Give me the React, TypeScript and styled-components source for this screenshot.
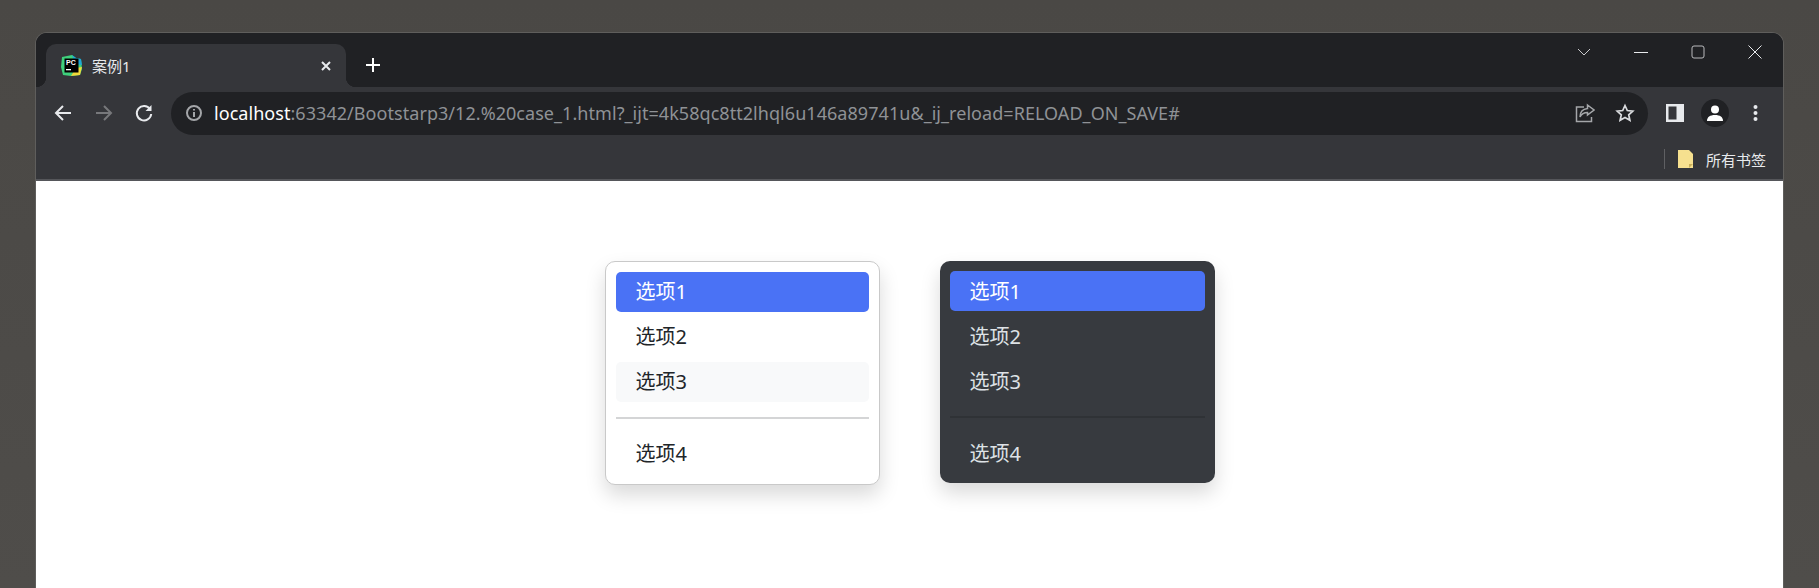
import { createGlobalStyle, styled } from 'styled-components';

const GlobalStyle = createGlobalStyle`
  html, body {
    margin: 0;
    height: 588px;
    overflow: hidden;
    background: #4c4a47;
    font-family: 'Noto Sans', 'Noto Sans CJK SC', sans-serif;
  }
`;

const SDesktop = styled.div`
  height: 588px;
  padding: 33px 36px 0;
  box-sizing: border-box;
  overflow: hidden;
  background: linear-gradient(#4a4845, #4f4d4a);
`;

const SWindow = styled.div`
  height: 600px;
  border-radius: 11px 11px 0 0;
  overflow: hidden;
  background: #202124;
  box-shadow: 0 0 0 1px #5f5e5c;
`;

const STabStrip = styled.div`
  display: flex;
  align-items: flex-start;
  height: 54px;
  padding: 11px 0 0 10px;
  box-sizing: border-box;
  background: #202124;
`;

const STab = styled.div`
  position: relative;
  display: flex;
  align-items: center;
  width: 300px;
  height: 43px;
  padding: 0 13px 0 15px;
  box-sizing: border-box;
  border-radius: 10px 10px 0 0;
  background: #35363a;
  color: #e8eaed;
  font-size: 15px;

  &::before,
  &::after {
    content: '';
    position: absolute;
    bottom: 0;
    width: 10px;
    height: 10px;
  }

  &::before {
    left: -10px;
    background: radial-gradient(circle at 0 0, transparent 10px, #35363a 10.5px);
  }

  &::after {
    right: -10px;
    background: radial-gradient(circle at 100% 0, transparent 10px, #35363a 10.5px);
  }
`;

const STabTitle = styled.span`
  flex: 1;
  margin-left: 10px;
`;

const SNewTab = styled.div`
  display: flex;
  margin: 13px 0 0 19px;
`;

const SWindowControls = styled.div`
  display: flex;
  align-items: center;
  gap: 43px;
  margin: 0 21px 0 auto;
  height: 16px;
`;

const SToolbar = styled.div`
  display: flex;
  align-items: center;
  height: 52px;
  padding: 0 25px 0 17px;
  box-sizing: border-box;
  background: #35363a;
`;

const SNavIcons = styled.div`
  display: flex;
  align-items: center;
  gap: 20.5px;
  margin-right: 17px;
`;

const SOmnibox = styled.div`
  display: flex;
  align-items: center;
  flex: 1;
  height: 43px;
  padding: 0 13px 0 14px;
  border-radius: 22px;
  background: #202124;
`;

const SUrl = styled.div`
  flex: 1;
  margin-left: 11px;
  color: #8f9296;
  font-size: 18px;
  white-space: nowrap;
  letter-spacing: 0.05px;
`;

const SHost = styled.span`
  color: #ffffff;
`;

const SOmniActions = styled.div`
  display: flex;
  align-items: center;
  gap: 20px;
`;

const SToolActions = styled.div`
  display: flex;
  align-items: center;
  gap: 17px;
  margin-left: 18px;
`;

const SMoreIcon = styled.svg`
  margin-left: 7px;
`;

const SAvatar = styled.div`
  display: flex;
  align-items: center;
  justify-content: center;
  width: 28px;
  height: 28px;
  border-radius: 50%;
  background: #202124;
`;

const SBookmarks = styled.div`
  display: flex;
  align-items: center;
  justify-content: flex-end;
  height: 40px;
  padding: 0 17px 0 0;
  box-sizing: border-box;
  background: #35363a;
`;

const SSeparator = styled.div`
  width: 1px;
  height: 20px;
  margin-right: 13px;
  background: #5f6063;
`;

const SBookmarkLabel = styled.span`
  margin-left: 13px;
  color: #e8eaed;
  font-size: 15px;
`;

const SContent = styled.main`
  display: flex;
  justify-content: center;
  align-items: flex-start;
  gap: 60px;
  height: 420px;
  padding-top: 80px;
  box-sizing: border-box;
  background: #ffffff;
  border-top: 2px solid #55565a;
`;

const SMenu = styled.ul<{ $dark?: boolean }>`
  display: flex;
  flex-direction: column;
  gap: 5px;
  width: 275px;
  margin: 0;
  padding: 10px;
  box-sizing: border-box;
  list-style: none;
  border-radius: 10px;
  border: ${({ $dark }) => ($dark ? '0' : '1px solid #c9c9c9')};
  background: ${({ $dark }) => ($dark ? '#373a3f' : '#ffffff')};
  color: ${({ $dark }) => ($dark ? '#dee2e6' : '#212529')};
  box-shadow: 0 10px 20px rgba(0, 0, 0, 0.15);
  font-size: 20px;
`;

const SItem = styled.li<{ $active?: boolean; $hover?: boolean; $dark?: boolean }>`
  height: 40px;
  padding: 0 20px;
  line-height: ${({ $dark }) => ($dark ? '42px' : '40px')};
  border-radius: 5px;
  background: ${({ $active, $hover }) => ($active ? '#4a72f5' : $hover ? '#f8f9fa' : 'transparent')};
  color: ${({ $active }) => ($active ? '#ffffff' : 'inherit')};
`;

const SDivider = styled.li<{ $dark?: boolean }>`
  height: 2px;
  margin: 10px 0;
  background: ${({ $dark }) => ($dark ? '#2f3236' : '#d4d5d6')};
`;

const PyCharmIcon = () => (
  <svg width="21" height="21" viewBox="0 0 21 21">
    <path d="M1 2 L11 0 L15 3 L20 4 L21 14 L19 20 L10 21 L2 20 L0 12 Z" fill="#3fd07c" />
    <path d="M11 0 L15 3 L20 4 L21 10 L14 9 Z" fill="#1fa8d8" />
    <path d="M10 21 L19 20 L21 12 L15 13 Z" fill="#f0d93a" />
    <rect x="3.500" y="3.500" width="14" height="14" fill="#000" />
    <text x="5" y="10" fill="#fff" fontSize="7" fontWeight="700" fontFamily="'Liberation Sans', sans-serif">PC</text>
    <rect x="5" y="14" width="5" height="1.300" fill="#fff" />
  </svg>
);

const Menu = ({ dark }: { dark?: boolean }) => (
  <SMenu $dark={dark}>
    <SItem $active $dark={dark}>选项1</SItem>
    <SItem $dark={dark}>选项2</SItem>
    <SItem $hover={!dark} $dark={dark}>选项3</SItem>
    <SDivider $dark={dark} />
    <SItem $dark={dark}>选项4</SItem>
  </SMenu>
);

const stroke = { fill: 'none', strokeWidth: 2 };

const App = () => (
  <SDesktop>
    <GlobalStyle />
    <SWindow>
      <STabStrip>
        <STab>
          <PyCharmIcon />
          <STabTitle>案例1</STabTitle>
          <svg width="14" height="14" viewBox="0 0 14 14" stroke="#e8eaed" {...stroke}>
            <path d="M3 3l8 8M11 3l-8 8" />
          </svg>
        </STab>
        <SNewTab>
          <svg width="16" height="16" viewBox="0 0 16 16" stroke="#ffffff" {...stroke}>
            <path d="M8 1v14M1 8h14" />
          </svg>
        </SNewTab>
        <SWindowControls>
          <svg width="14" height="14" viewBox="0 0 14 14" fill="none" stroke="#c9cacc">
            <path d="M1 4l6 6 6-6" />
          </svg>
          <svg width="14" height="14" viewBox="0 0 14 14" fill="none" stroke="#e8eaed">
            <path d="M0 7.500h14" />
          </svg>
          <svg width="14" height="14" viewBox="0 0 14 14" fill="none" stroke="#b9babc">
            <rect x="1" y="1" width="12" height="12" rx="2" />
          </svg>
          <svg width="14" height="14" viewBox="0 0 14 14" fill="none" stroke="#e8eaed">
            <path d="M0.500 0.500l13 13M13.500 0.500l-13 13" />
          </svg>
        </SWindowControls>
      </STabStrip>
      <SToolbar>
        <SNavIcons>
          <svg width="20" height="20" viewBox="0 0 20 20" stroke="#e8eaed" {...stroke}>
            <path d="M18 10H3M10 3l-7 7 7 7" />
          </svg>
          <svg width="20" height="20" viewBox="0 0 20 20" stroke="#77787b" {...stroke}>
            <path d="M2 10h15M10 3l7 7-7 7" />
          </svg>
          <svg width="20" height="20" viewBox="0 0 20 20" stroke="#e8eaed" {...stroke}>
            <path d="M16 6.200A7.200 7.200 0 1 0 17.200 11" />
            <path d="M17.500 2v6h-6z" fill="#e8eaed" stroke="none" />
          </svg>
        </SNavIcons>
        <SOmnibox>
          <svg width="18" height="18" viewBox="0 0 18 18" fill="none" stroke="#a4a6a9" strokeWidth="2">
            <circle cx="9" cy="9" r="7" />
            <path d="M9 8v5M9 5v1.600" />
          </svg>
          <SUrl>
            <SHost>localhost</SHost>:63342/Bootstarp3/12.%20case_1.html?_ijt=4k58qc8tt2lhql6u146a89741u&amp;_ij_reload=RELOAD_ON_SAVE#
          </SUrl>
          <SOmniActions>
            <svg width="20" height="20" viewBox="0 0 20 20" fill="none" stroke="#a4a6a9" strokeWidth="1.500">
              <path d="M9 4H1.500v14.500h15V14" />
              <path d="M12.500 2l6.500 5-6.500 5V9.500C9 9.500 6.500 11 5 14c0-5 3-8 7.500-8.500z" />
            </svg>
            <svg width="20" height="20" viewBox="0 0 20 20" fill="none" stroke="#d9dbde" strokeWidth="1.700">
              <path d="M10 2.500l2.300 5 5.500.6-4.100 3.700 1.200 5.400L10 14.400 5.100 17.200l1.200-5.400L2.200 8.100l5.500-.6z" />
            </svg>
          </SOmniActions>
        </SOmnibox>
        <SToolActions>
          <svg width="18" height="18" viewBox="0 0 18 18">
            <rect width="18" height="18" fill="#e8eaed" />
            <rect x="2.500" y="2.500" width="8" height="13" fill="#35363a" />
          </svg>
          <SAvatar>
            <svg width="18" height="18" viewBox="0 0 18 18" fill="#ffffff">
              <circle cx="9" cy="5.500" r="4" />
              <path d="M1 17c0-4 3-6 8-6s8 2 8 6z" />
            </svg>
          </SAvatar>
          <SMoreIcon width="5" height="18" viewBox="0 0 5 18" fill="#e8eaed">
            <circle cx="2.500" cy="3" r="2" />
            <circle cx="2.500" cy="9" r="2" />
            <circle cx="2.500" cy="15" r="2" />
          </SMoreIcon>
        </SToolActions>
      </SToolbar>
      <SBookmarks>
        <SSeparator />
        <svg width="15" height="18" viewBox="0 0 15 18">
          <path d="M0 0h11l4 4v14H0z" fill="#f6e08f" />
          <path d="M11 14h4l-4 4z" fill="#c9b05a" />
        </svg>
        <SBookmarkLabel>所有书签</SBookmarkLabel>
      </SBookmarks>
      <SContent>
        <Menu />
        <Menu dark />
      </SContent>
    </SWindow>
  </SDesktop>
);

export default App;
